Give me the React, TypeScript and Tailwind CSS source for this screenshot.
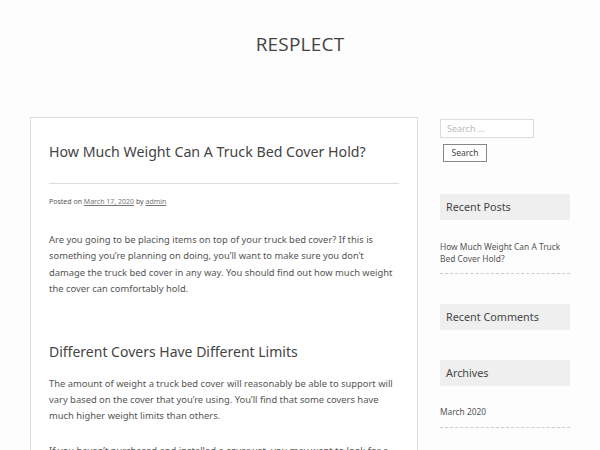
export default function App() {
  return (
    <div className="min-h-[450px] bg-[#fdfdfd] text-[#555] font-['Noto_Sans',sans-serif]">
      {/* Site title */}
      <header className="pt-[31px] pb-[60px] text-center">
        <h1 className="font-['Open_Sans',sans-serif] text-[19px] leading-[26px] text-[#444] tracking-[0.2px]">RESPLECT</h1>
      </header>

      <div className="flex gap-[22px] px-[30px] items-start">
        {/* Post */}
        <main className="w-[388px] shrink-0 border border-[#ddd] bg-white px-[18px] pt-[24px]">
          <h2 className="text-[14.2px] leading-[20px] text-[#444]">How Much Weight Can A Truck Bed Cover Hold?</h2>
          <div className="mt-[21px] border-t border-[#ddd]" />
          <p className="mt-[12px] text-[7px] leading-[12px] text-[#555]">
            Posted on <a className="underline text-[#777]">March 17, 2020</a> by{" "}
            <a className="underline text-[#777]">admin</a>
          </p>
          <p className="mt-[24px] text-[9.4px] leading-[16.4px] text-[#555]">
            Are you going to be placing items on top of your truck bed cover? If this is something you’re planning on
            doing, you’ll want to make sure you don’t damage the truck bed cover in any way. You should find out how
            much weight the cover can comfortably hold.
          </p>
          <h3 className="mt-[44px] text-[14px] leading-[20px] text-[#444]">Different Covers Have Different Limits</h3>
          <p className="mt-[14px] text-[9.4px] leading-[16.4px] text-[#555]">
            The amount of weight a truck bed cover will reasonably be able to support will vary based on the cover that
            you’re using. You’ll find that some covers have much higher weight limits than others.
          </p>
          <p className="mt-[18px] text-[9.4px] leading-[16.4px] text-[#555]">
            If you haven’t purchased and installed a cover yet, you may want to look for a cover that can hold a
            significant amount of weight.
          </p>
        </main>

        {/* Sidebar */}
        <aside className="w-[130px] shrink-0 pt-[2px]">
          <div className="w-[94px] h-[19px] border border-[#ddd] bg-white px-[6px] text-[9px] leading-[17px] text-[#bbb]">
            Search …
          </div>
          <button className="mt-[6px] ml-[3px] h-[18px] w-[44px] border border-[#888] bg-white text-[8.5px] leading-[16px] text-[#444]">
            Search
          </button>

          <h4 className="mt-[32px] h-[26px] bg-[#efefef] pl-[6px] text-[10.8px] leading-[26px] text-[#444]">Recent Posts</h4>
          <div className="mt-[21px] pb-[8px] border-b border-dashed border-[#ccc] text-[8.4px] leading-[12px] text-[#555]">
            How Much Weight Can A Truck Bed Cover Hold?
          </div>

          <h4 className="mt-[30px] h-[26px] bg-[#efefef] pl-[6px] text-[10.8px] leading-[26px] text-[#444]">Recent Comments</h4>

          <h4 className="mt-[30px] h-[26px] bg-[#efefef] pl-[6px] text-[10.8px] leading-[26px] text-[#444]">Archives</h4>
          <div className="mt-[20px] pb-[9px] border-b border-dashed border-[#ccc] text-[8.4px] leading-[12px] text-[#555]">
            March 2020
          </div>
        </aside>
      </div>
    </div>
  );
}
